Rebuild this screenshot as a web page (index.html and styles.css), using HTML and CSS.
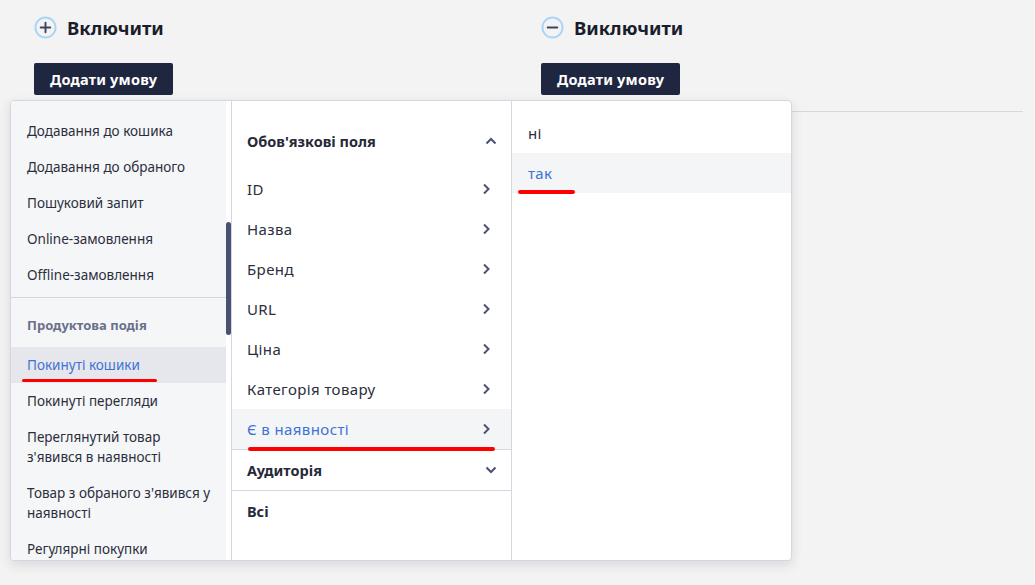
FILE: index.html
```html
<!DOCTYPE html>
<html>
<head>
    <title>Умови сегмента</title>
    <link rel="stylesheet" href="styles.css">
</head>
<body>
    <div class="page">
        <div class="rules">
            <section class="rule">
                <h2 class="rule-title">
                    <svg class="rule-icon" viewBox="0 0 24 24" width="23" height="23">
                        <circle cx="12" cy="12" r="10.5" fill="none" stroke="#a9d5f7" stroke-width="2"/>
                        <path d="M12 7v10M7 12h10" stroke="#3d4462" stroke-width="2" stroke-linecap="round"/>
                    </svg>
                    Включити
                </h2>
                <button class="add-btn">Додати умову</button>
                <div class="rule-line"></div>
            </section>
            <section class="rule">
                <h2 class="rule-title">
                    <svg class="rule-icon" viewBox="0 0 24 24" width="23" height="23">
                        <circle cx="12" cy="12" r="10.5" fill="none" stroke="#a9d5f7" stroke-width="2"/>
                        <path d="M7 12h10" stroke="#3d4462" stroke-width="2" stroke-linecap="round"/>
                    </svg>
                    Виключити
                </h2>
                <button class="add-btn">Додати умову</button>
                <div class="rule-line"></div>
            </section>
        </div>

        <!-- condition picker: events / fields / values -->
        <div class="picker">
            <div class="col col-events">
                <div class="events-list">
                    <div class="ev-group">
                        <div class="ev-item">Додавання до кошика</div>
                        <div class="ev-item">Додавання до обраного</div>
                        <div class="ev-item">Пошуковий запит</div>
                        <div class="ev-item">Online-замовлення</div>
                        <div class="ev-item">Offline-замовлення</div>
                    </div>
                    <div class="ev-group">
                        <div class="ev-heading">Продуктова подія</div>
                        <div class="ev-item active">Покинуті кошики<span class="mark"></span></div>
                        <div class="ev-item">Покинуті перегляди</div>
                        <div class="ev-item">Переглянутий товар<br>з'явився в наявності</div>
                        <div class="ev-item">Товар з обраного з'явився у<br>наявності</div>
                        <div class="ev-item">Регулярні покупки</div>
                    </div>
                </div>
                <div class="scroll-track"><div class="scroll-thumb"></div></div>
            </div>

            <div class="col col-fields">
                <div class="fld-group open">
                    <div class="fld-head">
                        <span>Обов'язкові поля</span>
                        <svg width="12" height="8" viewBox="0 0 12 8"><path d="M1.5 6.5L6 2l4.5 4.5" fill="none" stroke="#4b5273" stroke-width="2"/></svg>
                    </div>
                    <div class="fld-items">
                        <div class="fld-item"><span>ID</span><svg class="chev" width="8" height="12" viewBox="0 0 8 12"><path d="M2 1.5L6.5 6 2 10.5" fill="none" stroke="#4b5273" stroke-width="2"/></svg></div>
                        <div class="fld-item"><span>Назва</span><svg class="chev" width="8" height="12" viewBox="0 0 8 12"><path d="M2 1.5L6.5 6 2 10.5" fill="none" stroke="#4b5273" stroke-width="2"/></svg></div>
                        <div class="fld-item"><span>Бренд</span><svg class="chev" width="8" height="12" viewBox="0 0 8 12"><path d="M2 1.5L6.5 6 2 10.5" fill="none" stroke="#4b5273" stroke-width="2"/></svg></div>
                        <div class="fld-item"><span>URL</span><svg class="chev" width="8" height="12" viewBox="0 0 8 12"><path d="M2 1.5L6.5 6 2 10.5" fill="none" stroke="#4b5273" stroke-width="2"/></svg></div>
                        <div class="fld-item"><span>Ціна</span><svg class="chev" width="8" height="12" viewBox="0 0 8 12"><path d="M2 1.5L6.5 6 2 10.5" fill="none" stroke="#4b5273" stroke-width="2"/></svg></div>
                        <div class="fld-item"><span>Категорія товару</span><svg class="chev" width="8" height="12" viewBox="0 0 8 12"><path d="M2 1.5L6.5 6 2 10.5" fill="none" stroke="#4b5273" stroke-width="2"/></svg></div>
                        <div class="fld-item active"><span>Є в наявності</span><svg class="chev" width="8" height="12" viewBox="0 0 8 12"><path d="M2 1.5L6.5 6 2 10.5" fill="none" stroke="#4b5273" stroke-width="2"/></svg><span class="mark"></span></div>
                    </div>
                </div>
                <div class="fld-group">
                    <div class="fld-head">
                        <span>Аудиторія</span>
                        <svg width="12" height="8" viewBox="0 0 12 8"><path d="M1.5 1.5L6 6l4.5-4.5" fill="none" stroke="#4b5273" stroke-width="2"/></svg>
                    </div>
                </div>
                <div class="fld-group">
                    <div class="fld-head"><span>Всі</span></div>
                </div>
            </div>

            <div class="col col-values">
                <div class="val-item">ні</div>
                <div class="val-item active">так<span class="mark"></span></div>
            </div>
        </div>
    </div>
</body>
</html>
```

FILE: styles.css
```css
body {
    margin: 0;
    background: #f3f3f3;
    font-family: "Noto Sans", "Liberation Sans", sans-serif;
    color: #2b2e3c;
}
.page {
    position: relative;
    height: 585px;
    padding: 16px 12px 0 34px;
    box-sizing: border-box;
}
.rules {
    display: grid;
    grid-template-columns: 507px 1fr;
}
.rule-title {
    display: flex;
    align-items: center;
    gap: 10px;
    height: 22px;
    margin: 0 0 25px;
    font-size: 18.5px;
    font-weight: bold;
    color: #1a1d2b;
}
.add-btn {
    height: 32px;
    padding: 0 16px;
    border: none;
    border-radius: 2px;
    background: #1f2640;
    color: #fff;
    font-family: inherit;
    font-size: 14.5px;
    font-weight: bold;
    letter-spacing: 0.2px;
    cursor: pointer;
}
.rule-line {
    margin-top: 16px;
    border-top: 1px solid #d6d8e0;
}

/* dropdown */
.picker {
    position: absolute;
    left: 10px;
    top: 100px;
    width: 780px;
    height: 459px;
    display: flex;
    background: #fff;
    border: 1px solid #d4d6e0;
    border-radius: 4px;
    box-shadow: 0 4px 12px rgba(30, 35, 60, 0.12);
    overflow: hidden;
}
.col {
    position: relative;
}
.col-events {
    width: 220px;
    display: flex;
    border-right: 1px solid #d4d6e0;
}
.events-list {
    flex: 1;
    padding-top: 12px;
    background: #f5f6f8;
    overflow: hidden;
}
.ev-group:first-child {
    padding-bottom: 4px;
    border-bottom: 1px solid #d4d6e0;
}
.ev-item {
    position: relative;
    padding: 8px 16px;
    font-size: 13.5px;
    line-height: 20px;
    white-space: nowrap;
}
.ev-item.active {
    background: #e6e7ec;
    color: #3d72d6;
}
.ev-heading {
    padding: 17px 16px 12px;
    font-size: 13px;
    line-height: 20px;
    font-weight: bold;
    color: #6b7088;
}
.scroll-track {
    width: 5px;
    background: #fff;
}
.scroll-thumb {
    margin-top: 121px;
    height: 113px;
    border-radius: 3px;
    background: #4a5072;
}

.col-fields {
    width: 279px;
    padding-top: 20px;
    border-right: 1px solid #d4d6e0;
}
.fld-group {
    border-bottom: 1px solid #d4d6e0;
}
.fld-group:last-child {
    border-bottom: none;
}
.fld-group.open .fld-head {
    margin-bottom: 8px;
}
.fld-head {
    display: flex;
    align-items: center;
    justify-content: space-between;
    height: 40px;
    padding: 0 14px 0 15px;
    font-size: 14.5px;
    font-weight: bold;
    color: #262938;
}
.fld-item {
    position: relative;
    display: flex;
    align-items: center;
    justify-content: space-between;
    height: 40px;
    padding: 0 21px 0 15px;
    font-size: 15px;
    letter-spacing: 0.4px;
}
.fld-item.active {
    background: #f4f5f7;
    color: #3d72d6;
}

.col-values {
    flex: 1;
    padding-top: 12px;
}
.val-item {
    position: relative;
    height: 40px;
    line-height: 40px;
    padding-left: 16px;
    font-size: 15px;
    letter-spacing: 0.3px;
}
.val-item.active {
    background: #f4f5f7;
    color: #3d72d6;
}

/* red hand-drawn underline on the chosen entries */
.mark {
    position: absolute;
    height: 4px;
    border-radius: 2px;
    background: #ff0000;
    z-index: 1;
}
.ev-item .mark {
    left: 11px;
    top: 32px;
    width: 135px;
    height: 3px;
}
.fld-item .mark {
    left: 16px;
    top: 38px;
    width: 247px;
}
.val-item .mark {
    left: 6px;
    top: 37px;
    width: 57px;
}
```
